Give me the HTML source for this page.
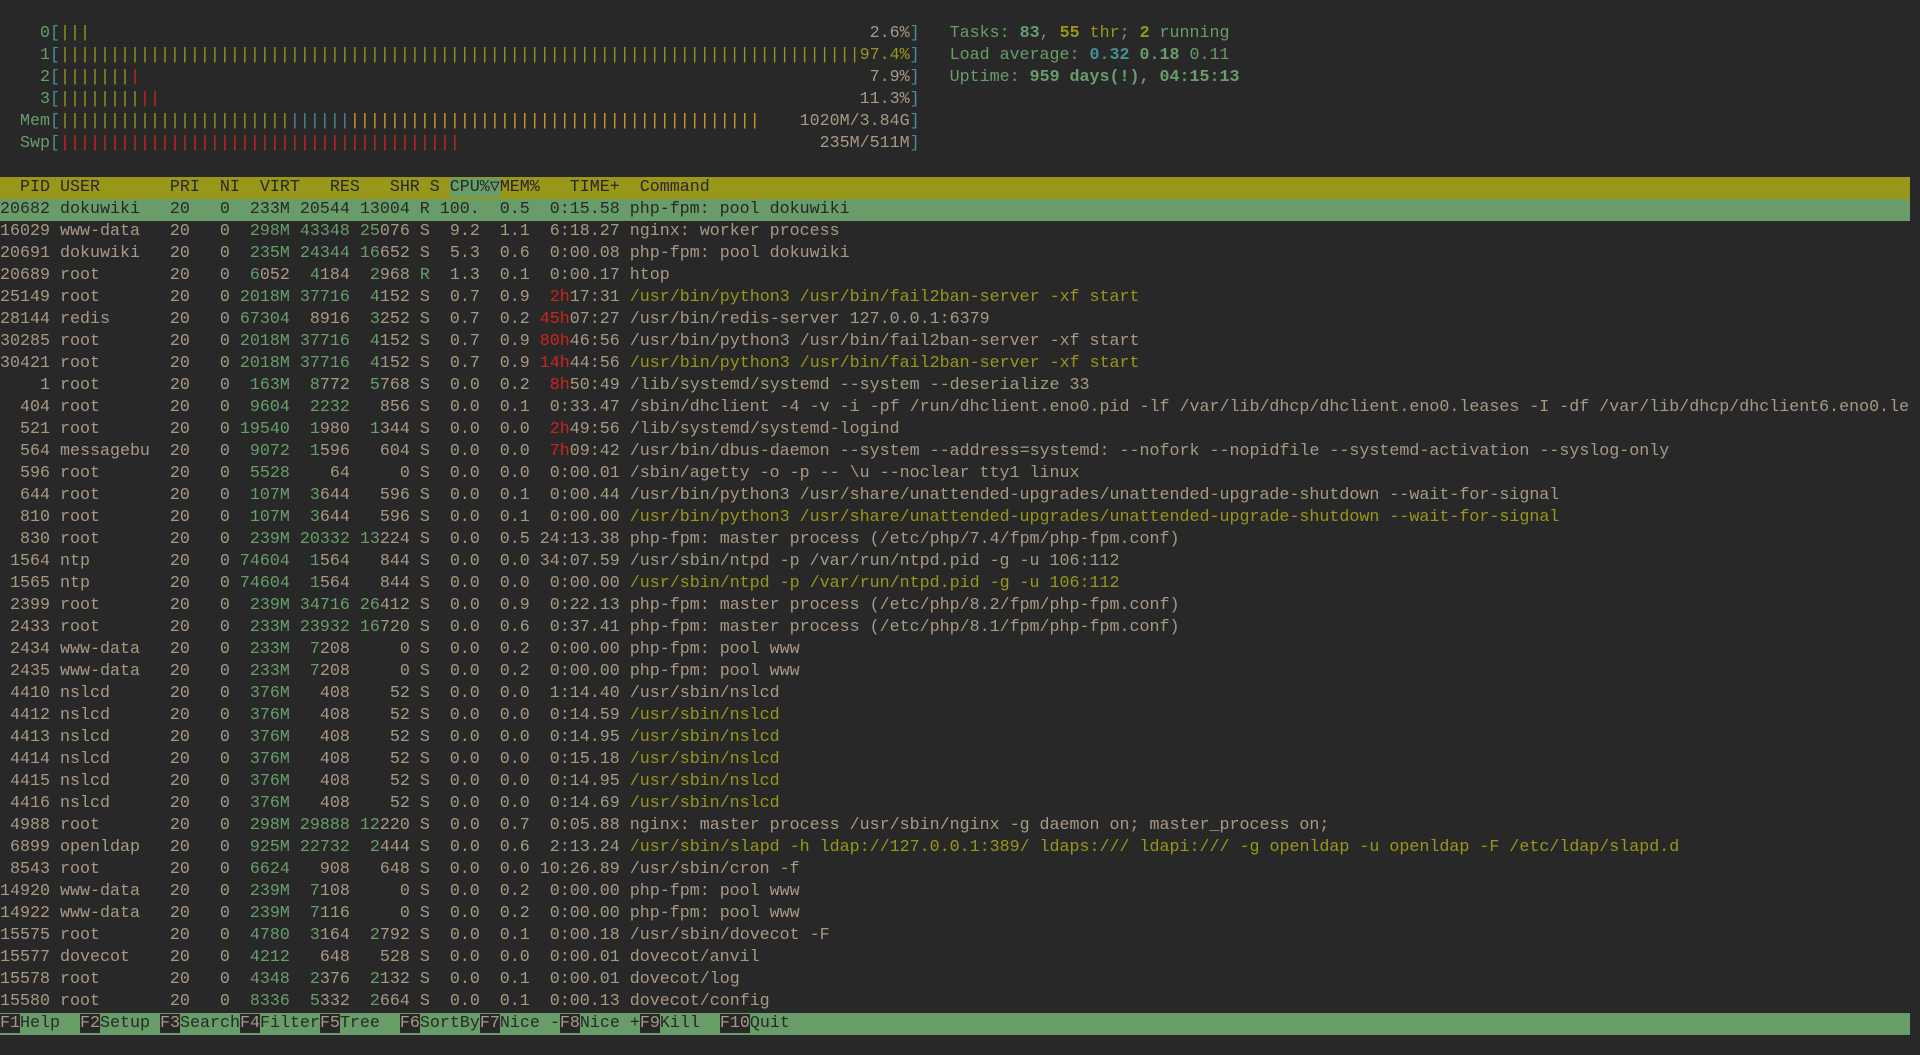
<!DOCTYPE html>
<html><head><meta charset="utf-8">
<style>
html,body{margin:0;padding:0;background:#282828;width:1920px;height:1055px;overflow:hidden}
#s{position:absolute;top:23px;left:0;width:1910px;font-family:"Liberation Mono","DejaVu Sans Mono",monospace;font-size:16.67px;line-height:22px;color:#a89984}
.l{height:22px;white-space:pre;overflow:hidden}
.g{color:#689d6a}.r{color:#cc241d}.y{color:#98971a}.t{color:#458f94}.o{color:#d79921}.b{font-weight:bold}
.hd{background:#98971a;color:#282828}
.sel{background:#689d6a;color:#282828}
.hc{background:#689d6a}
.fb{background:#689d6a;color:#282828}
.fk{background:#282828;color:#a89984}
</style></head><body><div id="s">
<div class="l">    <span class="g">0</span><span class="t">[</span><span class="y">|||</span>                                                                              2.6%<span class="t">]</span>   <span class="g">Tasks: </span><span class="g b">83</span><span class="g">, </span><span class="y b">55</span><span class="y"> thr</span><span class="g">; </span><span class="y b">2</span><span class="g"> running</span></div>
<div class="l">    <span class="g">1</span><span class="t">[</span><span class="y">||||||||||||||||||||||||||||||||||||||||||||||||||||||||||||||||||||||||||||||||97.4%</span><span class="t">]</span>   <span class="g">Load average: </span><span class="t b">0.32</span> <span class="g b">0.18</span> <span class="g">0.11</span></div>
<div class="l">    <span class="g">2</span><span class="t">[</span><span class="y">|||||||</span><span class="r">|</span>                                                                         7.9%<span class="t">]</span>   <span class="g">Uptime: </span><span class="g b">959 days(!), 04:15:13</span></div>
<div class="l">    <span class="g">3</span><span class="t">[</span><span class="y">||||||||</span><span class="r">||</span>                                                                      11.3%<span class="t">]</span></div>
<div class="l">  <span class="g">Mem</span><span class="t">[</span><span class="y">|||||||||||||||||||||||</span><span class="t">||||||</span><span class="o">|||||||||||||||||||||||||||||||||||||||||</span>    1020M/3.84G<span class="t">]</span></div>
<div class="l">  <span class="g">Swp</span><span class="t">[</span><span class="r">||||||||||||||||||||||||||||||||||||||||</span>                                    235M/511M<span class="t">]</span></div>
<div class="l"> </div>
<div class="l hd">  PID USER       PRI  NI  VIRT   RES   SHR S <span class="hc">CPU%▽</span>MEM%   TIME+  Command                                                                                                                                </div>
<div class="l sel">20682 dokuwiki   20   0  233M 20544 13004 R 100.  0.5  0:15.58 php-fpm: pool dokuwiki                                                                                                                                      </div>
<div class="l">16029 www-data   20   0  <span class="g">298M</span> <span class="g">43348</span> <span class="g">25</span>076 S  9.2  1.1  6:18.27 nginx: worker process</div>
<div class="l">20691 dokuwiki   20   0  <span class="g">235M</span> <span class="g">24344</span> <span class="g">16</span>652 S  5.3  0.6  0:00.08 php-fpm: pool dokuwiki</div>
<div class="l">20689 root       20   0  <span class="g">6</span>052  <span class="g">4</span>184  <span class="g">2</span>968 <span class="g">R</span>  1.3  0.1  0:00.17 htop</div>
<div class="l">25149 root       20   0 <span class="g">2018M</span> <span class="g">37716</span>  <span class="g">4</span>152 S  0.7  0.9  <span class="r">2h</span>17:31 <span class="y">/usr/bin/python3 /usr/bin/fail2ban-server -xf start</span></div>
<div class="l">28144 redis      20   0 <span class="g">67304</span>  8916  <span class="g">3</span>252 S  0.7  0.2 <span class="r">45h</span>07:27 /usr/bin/redis-server 127.0.0.1:6379</div>
<div class="l">30285 root       20   0 <span class="g">2018M</span> <span class="g">37716</span>  <span class="g">4</span>152 S  0.7  0.9 <span class="r">80h</span>46:56 /usr/bin/python3 /usr/bin/fail2ban-server -xf start</div>
<div class="l">30421 root       20   0 <span class="g">2018M</span> <span class="g">37716</span>  <span class="g">4</span>152 S  0.7  0.9 <span class="r">14h</span>44:56 <span class="y">/usr/bin/python3 /usr/bin/fail2ban-server -xf start</span></div>
<div class="l">    1 root       20   0  <span class="g">163M</span>  <span class="g">8</span>772  <span class="g">5</span>768 S  0.0  0.2  <span class="r">8h</span>50:49 /lib/systemd/systemd --system --deserialize 33</div>
<div class="l">  404 root       20   0  <span class="g">9604</span>  <span class="g">2232</span>   856 S  0.0  0.1  0:33.47 /sbin/dhclient -4 -v -i -pf /run/dhclient.eno0.pid -lf /var/lib/dhcp/dhclient.eno0.leases -I -df /var/lib/dhcp/dhclient6.eno0.le</div>
<div class="l">  521 root       20   0 <span class="g">19540</span>  <span class="g">1</span>980  <span class="g">1</span>344 S  0.0  0.0  <span class="r">2h</span>49:56 /lib/systemd/systemd-logind</div>
<div class="l">  564 messagebu  20   0  <span class="g">9072</span>  <span class="g">1</span>596   604 S  0.0  0.0  <span class="r">7h</span>09:42 /usr/bin/dbus-daemon --system --address=systemd: --nofork --nopidfile --systemd-activation --syslog-only</div>
<div class="l">  596 root       20   0  <span class="g">5528</span>    64     0 S  0.0  0.0  0:00.01 /sbin/agetty -o -p -- \u --noclear tty1 linux</div>
<div class="l">  644 root       20   0  <span class="g">107M</span>  <span class="g">3</span>644   596 S  0.0  0.1  0:00.44 /usr/bin/python3 /usr/share/unattended-upgrades/unattended-upgrade-shutdown --wait-for-signal</div>
<div class="l">  810 root       20   0  <span class="g">107M</span>  <span class="g">3</span>644   596 S  0.0  0.1  0:00.00 <span class="y">/usr/bin/python3 /usr/share/unattended-upgrades/unattended-upgrade-shutdown --wait-for-signal</span></div>
<div class="l">  830 root       20   0  <span class="g">239M</span> <span class="g">20332</span> <span class="g">13</span>224 S  0.0  0.5 24:13.38 php-fpm: master process (/etc/php/7.4/fpm/php-fpm.conf)</div>
<div class="l"> 1564 ntp        20   0 <span class="g">74604</span>  <span class="g">1</span>564   844 S  0.0  0.0 34:07.59 /usr/sbin/ntpd -p /var/run/ntpd.pid -g -u 106:112</div>
<div class="l"> 1565 ntp        20   0 <span class="g">74604</span>  <span class="g">1</span>564   844 S  0.0  0.0  0:00.00 <span class="y">/usr/sbin/ntpd -p /var/run/ntpd.pid -g -u 106:112</span></div>
<div class="l"> 2399 root       20   0  <span class="g">239M</span> <span class="g">34716</span> <span class="g">26</span>412 S  0.0  0.9  0:22.13 php-fpm: master process (/etc/php/8.2/fpm/php-fpm.conf)</div>
<div class="l"> 2433 root       20   0  <span class="g">233M</span> <span class="g">23932</span> <span class="g">16</span>720 S  0.0  0.6  0:37.41 php-fpm: master process (/etc/php/8.1/fpm/php-fpm.conf)</div>
<div class="l"> 2434 www-data   20   0  <span class="g">233M</span>  <span class="g">7</span>208     0 S  0.0  0.2  0:00.00 php-fpm: pool www</div>
<div class="l"> 2435 www-data   20   0  <span class="g">233M</span>  <span class="g">7</span>208     0 S  0.0  0.2  0:00.00 php-fpm: pool www</div>
<div class="l"> 4410 nslcd      20   0  <span class="g">376M</span>   408    52 S  0.0  0.0  1:14.40 /usr/sbin/nslcd</div>
<div class="l"> 4412 nslcd      20   0  <span class="g">376M</span>   408    52 S  0.0  0.0  0:14.59 <span class="y">/usr/sbin/nslcd</span></div>
<div class="l"> 4413 nslcd      20   0  <span class="g">376M</span>   408    52 S  0.0  0.0  0:14.95 <span class="y">/usr/sbin/nslcd</span></div>
<div class="l"> 4414 nslcd      20   0  <span class="g">376M</span>   408    52 S  0.0  0.0  0:15.18 <span class="y">/usr/sbin/nslcd</span></div>
<div class="l"> 4415 nslcd      20   0  <span class="g">376M</span>   408    52 S  0.0  0.0  0:14.95 <span class="y">/usr/sbin/nslcd</span></div>
<div class="l"> 4416 nslcd      20   0  <span class="g">376M</span>   408    52 S  0.0  0.0  0:14.69 <span class="y">/usr/sbin/nslcd</span></div>
<div class="l"> 4988 root       20   0  <span class="g">298M</span> <span class="g">29888</span> <span class="g">12</span>220 S  0.0  0.7  0:05.88 nginx: master process /usr/sbin/nginx -g daemon on; master_process on;</div>
<div class="l"> 6899 openldap   20   0  <span class="g">925M</span> <span class="g">22732</span>  <span class="g">2</span>444 S  0.0  0.6  2:13.24 <span class="y">/usr/sbin/slapd -h ldap://127.0.0.1:389/ ldaps:/// ldapi:/// -g openldap -u openldap -F /etc/ldap/slapd.d</span></div>
<div class="l"> 8543 root       20   0  <span class="g">6624</span>   908   648 S  0.0  0.0 10:26.89 /usr/sbin/cron -f</div>
<div class="l">14920 www-data   20   0  <span class="g">239M</span>  <span class="g">7</span>108     0 S  0.0  0.2  0:00.00 php-fpm: pool www</div>
<div class="l">14922 www-data   20   0  <span class="g">239M</span>  <span class="g">7</span>116     0 S  0.0  0.2  0:00.00 php-fpm: pool www</div>
<div class="l">15575 root       20   0  <span class="g">4780</span>  <span class="g">3</span>164  <span class="g">2</span>792 S  0.0  0.1  0:00.18 /usr/sbin/dovecot -F</div>
<div class="l">15577 dovecot    20   0  <span class="g">4212</span>   648   528 S  0.0  0.0  0:00.01 dovecot/anvil</div>
<div class="l">15578 root       20   0  <span class="g">4348</span>  <span class="g">2</span>376  <span class="g">2</span>132 S  0.0  0.1  0:00.01 dovecot/log</div>
<div class="l">15580 root       20   0  <span class="g">8336</span>  <span class="g">5</span>332  <span class="g">2</span>664 S  0.0  0.1  0:00.13 dovecot/config</div>
<div class="l fb"><span class="fk">F1</span>Help  <span class="fk">F2</span>Setup <span class="fk">F3</span>Search<span class="fk">F4</span>Filter<span class="fk">F5</span>Tree  <span class="fk">F6</span>SortBy<span class="fk">F7</span>Nice -<span class="fk">F8</span>Nice +<span class="fk">F9</span>Kill  <span class="fk">F10</span>Quit                                                                                                                                    </div>
</div></body></html>
